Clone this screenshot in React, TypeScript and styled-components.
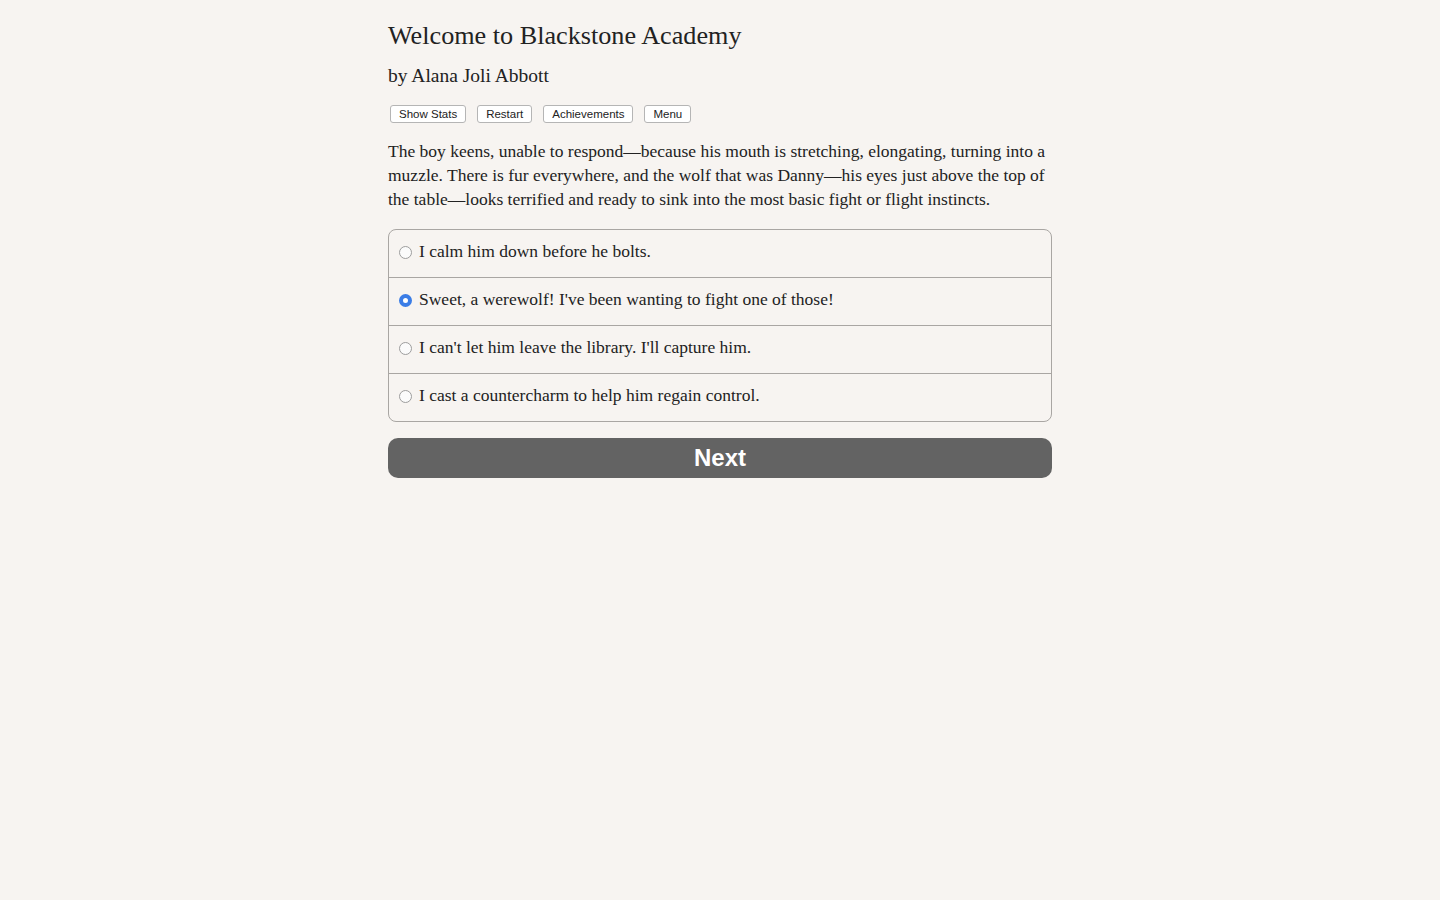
import styled, { createGlobalStyle } from "styled-components";

const Global = createGlobalStyle`
    html, body {
        margin: 0;
        padding: 0;
        background-color: #f7f4f1;
    }
    body {
        font-family: "Liberation Serif", "Times New Roman", serif;
        color: #222222;
    }
`

const Page = styled.div`
    width: 664px;
    margin: 0 auto;
    padding-top: 20px;
`

const Titulo = styled.h1`
    margin: 0;
    font-size: 26.2px;
    font-weight: normal;
    line-height: 32px;
`

const Autor = styled.h2`
    margin: 12px 0 0 0;
    font-size: 19.5px;
    font-weight: normal;
    line-height: 24px;
`

const Barra = styled.div`
    display: flex;
    gap: 11px;
    margin-top: 17px;
    padding-left: 2px;
`

const Botao = styled.button`
    font-family: "Liberation Sans", Arial, sans-serif;
    font-size: 11.5px;
    color: #222;
    background: #ffffff;
    border: 1px solid #b5b5b5;
    border-radius: 3px;
    height: 18px;
    padding: 0 8px;
`

const Texto = styled.p`
    margin: 16px 0 0 0;
    font-size: 17.5px;
    line-height: 24px;
`

const Opcoes = styled.div`
    margin-top: 18px;
    border: 1px solid #a9a6a3;
    border-radius: 8px;
    overflow: hidden;
`

const Opcao = styled.label`
    display: flex;
    align-items: center;
    box-sizing: border-box;
    height: 48px;
    padding: 0 0 4px 10px;
    font-size: 17.5px;
    border-top: 1px solid #a9a6a3;
    &:first-child {
        border-top: none;
        height: 47px;
    }
`

const Radio = styled.span<{ $marcado: boolean }>`
    width: 13px;
    height: 13px;
    box-sizing: border-box;
    border-radius: 50%;
    margin-right: 7px;
    margin-top: 2px;
    flex-shrink: 0;
    background: ${p => p.$marcado ? "#ffffff" : "#fbfbfb"};
    border: ${p => p.$marcado ? "4px solid #3b7de6" : "1px solid #9d9d9d"};
`

const Proximo = styled.button`
    display: block;
    width: 100%;
    height: 40px;
    margin-top: 16px;
    padding-top: 1px;
    background: #636363;
    color: #ffffff;
    border: none;
    border-radius: 10px;
    font-family: "Liberation Sans", Arial, sans-serif;
    font-weight: bold;
    font-size: 24px;
`

const escolhas = [
    "I calm him down before he bolts.",
    "Sweet, a werewolf! I've been wanting to fight one of those!",
    "I can't let him leave the library. I'll capture him.",
    "I cast a countercharm to help him regain control.",
]

export default function App() {
    return (
        <>
            <Global />
            <Page>
                <Titulo>Welcome to Blackstone Academy</Titulo>
                <Autor>by Alana Joli Abbott</Autor>
                <Barra>
                    <Botao>Show Stats</Botao>
                    <Botao>Restart</Botao>
                    <Botao>Achievements</Botao>
                    <Botao>Menu</Botao>
                </Barra>
                <Texto>
                    The boy keens, unable to respond—because his mouth is stretching, elongating, turning into a muzzle. There is fur everywhere, and the wolf that was Danny—his eyes just above the top of the table—looks terrified and ready to sink into the most basic fight or flight instincts.
                </Texto>
                <Opcoes>
                    {escolhas.map((e, i) => (
                        <Opcao key={i}>
                            <Radio $marcado={i === 1} />
                            {e}
                        </Opcao>
                    ))}
                </Opcoes>
                <Proximo>Next</Proximo>
            </Page>
        </>
    )
}
